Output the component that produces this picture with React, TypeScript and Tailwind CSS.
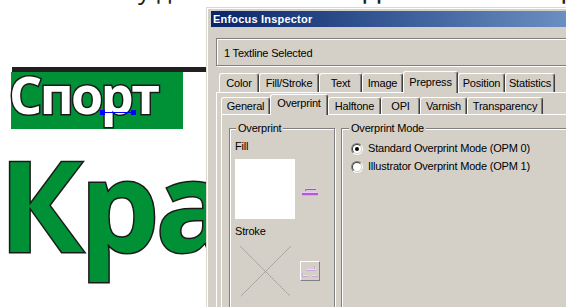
import React from "react";

const tabsRow1: { label: string; w: string; sel?: boolean }[] = [
  { label: "Color", w: "w-[40px]" },
  { label: "Fill/Stroke", w: "w-[60px]" },
  { label: "Text", w: "w-[43px]" },
  { label: "Image", w: "w-[41px]" },
  { label: "Prepress", w: "w-[55px]", sel: true },
  { label: "Position", w: "w-[47px]" },
  { label: "Statistics", w: "w-[50px]" },
];

const tabsRow2: { label: string; w: string; sel?: boolean }[] = [
  { label: "General", w: "w-[49px]" },
  { label: "Overprint", w: "w-[58px]", sel: true },
  { label: "Halftone", w: "w-[53px]" },
  { label: "OPI", w: "w-[39px]" },
  { label: "Varnish", w: "w-[47px]" },
  { label: "Transparency", w: "w-[76px]" },
];

const tabBase =
  "whitespace-nowrap text-center bg-[#d4d0c8] border-l border-t border-r border-white border-r-[#404040] rounded-t-[3px] shadow-[inset_-1px_0_0_#808080]";

function Row1Tab({ label, w, sel }: { label: string; w: string; sel?: boolean }) {
  return sel ? (
    <div className={`${tabBase} ${w} relative z-10 h-[22px] -mb-px pt-[4px]`}>{label}</div>
  ) : (
    <div className={`${tabBase} ${w} h-[19px] pt-[3px]`}>{label}</div>
  );
}

function Row2Tab({ label, w, sel }: { label: string; w: string; sel?: boolean }) {
  return sel ? (
    <div className={`${tabBase} ${w} relative z-10 h-[21px] -mb-px pt-[2px]`}>{label}</div>
  ) : (
    <div className={`${tabBase} ${w} h-[17px] pt-[2px]`}>{label}</div>
  );
}

function SwapIcon() {
  return (
    <svg width="16" height="9" viewBox="0 0 16 9" shapeRendering="crispEdges">
      <rect x="4" y="0" width="10" height="1" fill="#ecc8f8" />
      <rect x="4" y="1" width="10" height="1" fill="#a84ad4" />
      <rect x="3" y="1" width="1" height="1" fill="#c890e8" />
      <rect x="3" y="2" width="1" height="1" fill="#a84ad4" />
      <rect x="0" y="4" width="16" height="1" fill="#ecc8f8" />
      <rect x="0" y="5" width="16" height="2" fill="#b05ad8" />
      <rect x="0" y="7" width="16" height="1" fill="#d8a8ec" />
    </svg>
  );
}

function SwapIconDisabled() {
  return (
    <svg width="16" height="12" viewBox="0 0 16 12" shapeRendering="crispEdges">
      <rect x="12" y="0" width="1" height="4" fill="#c8a8dc" />
      <rect x="13" y="1" width="1" height="3" fill="#eadcf2" />
      <rect x="4" y="3" width="9" height="1" fill="#eadcf2" />
      <rect x="4" y="4" width="10" height="1" fill="#c8a8dc" />
      <rect x="0" y="7" width="1" height="4" fill="#c8a8dc" />
      <rect x="1" y="8" width="1" height="2" fill="#eadcf2" />
      <rect x="1" y="9" width="5" height="1" fill="#eadcf2" />
      <rect x="0" y="10" width="6" height="1" fill="#c8a8dc" />
      <rect x="10" y="9" width="5" height="1" fill="#eadcf2" />
      <rect x="10" y="10" width="6" height="1" fill="#c8a8dc" />
    </svg>
  );
}

function Radio({ checked }: { checked?: boolean }) {
  return (
    <div className="w-[12px] h-[12px] shrink-0 rounded-full border border-t-[#808080] border-l-[#808080] border-b-white border-r-white flex items-center justify-center">
      <div className="w-[10px] h-[10px] rounded-full border border-t-[#404040] border-l-[#404040] border-b-[#d4d0c8] border-r-[#d4d0c8] bg-white flex items-center justify-center">
        {checked && <div className="w-[4px] h-[4px] rounded-full bg-black" />}
      </div>
    </div>
  );
}

const etched = "border border-[#808080] shadow-[inset_1px_1px_0_#ffffff,1px_1px_0_#ffffff]";

export default function App() {
  return (
    <div className="relative w-[566px] h-[307px] overflow-hidden bg-white">
      {/* artwork canvas */}
      <span className="absolute left-[138px] top-[-23px] font-['Open_Sans',sans-serif] text-[25px] leading-none text-[#231f20]">у</span>
      <span className="absolute left-[157px] top-[-23px] font-['Open_Sans',sans-serif] text-[25px] leading-none text-[#231f20]">д</span>
      <span className="absolute left-[363px] top-[-29px] font-['Open_Sans',sans-serif] text-[31px] leading-none text-[#231f20]">д</span>
      <span className="absolute left-[562px] top-[-29px] font-['Open_Sans',sans-serif] text-[31px] leading-none text-[#231f20]">д</span>

      <div className="absolute left-[12px] top-[67px] w-[195px] h-[5px] bg-[#231f20]" />
      <div className="absolute left-[11px] top-[72px] w-[172px] h-[57px] bg-[#009036]" />
      <span className="absolute left-[9px] top-[68px] h-[62px] font-['Open_Sans',sans-serif] font-bold text-[52px] leading-none tracking-[-2.5px] text-white [-webkit-text-stroke:3px_#1a1a1a] [paint-order:stroke_fill]">
        Спорт
      </span>
      <div className="absolute left-[100px] top-[110px] flex items-center">
        <div className="w-[5px] h-[5px] bg-[#0000ff]" />
        <div className="w-[26px] h-px bg-[#0000ff]" />
        <div className="w-[5px] h-[5px] bg-[#0000ff]" />
      </div>
      <span className="absolute left-[-1px] top-[140px] font-['Open_Sans',sans-serif] font-bold text-[126px] leading-none tracking-[-4px] text-[#009036] [-webkit-text-stroke:3px_#1a1a1a] [paint-order:stroke_fill]">
        Кра
      </span>

      {/* Inspector window */}
      <div className="absolute left-[206px] top-[7px] w-[545px] h-[320px] bg-[#d4d0c8] border-l border-t border-[#dcd8d0] font-['Liberation_Sans',Arial,sans-serif] text-[11px] leading-[13px] tracking-[-0.2px] text-black">
        <div className="h-full border-l border-t border-white pl-[3px] pt-[2px] flex flex-col">
          <div className="h-[16px] shrink-0 bg-linear-to-r from-[#0a246a] to-[#a6caf0] flex items-center pl-[2px] text-white font-bold tracking-[0.2px]">
            Enfocus Inspector
          </div>
          <div className={`ml-[5px] mt-[11px] h-[28px] shrink-0 ${etched} pl-[7px] pt-[8px]`}>1 Textline Selected</div>

          <div className="ml-[5px] mt-[5px] flex flex-col">
            <div className="flex items-end h-[21px] pl-[3px]">
              {tabsRow1.map((t) => (
                <Row1Tab key={t.label} {...t} />
              ))}
            </div>
            <div className="border-l border-t border-white pl-[4px] pt-[1px] flex flex-col h-[230px]">
              <div className="flex items-end h-[20px]">
                {tabsRow2.map((t) => (
                  <Row2Tab key={t.label} {...t} />
                ))}
              </div>
              <div className="border-l border-t border-white pl-[7px] pt-[13px] flex flex-1">
                {/* Overprint group */}
                <div className={`relative w-[106px] h-[200px] shrink-0 ${etched} pl-[5px] pt-[11px] flex flex-col`}>
                  <div className="absolute left-[6px] -top-[7px] px-[2px] bg-[#d4d0c8]">Overprint</div>
                  <div>Fill</div>
                  <div className="mt-[6px] flex items-center">
                    <div className="w-[60px] h-[60px] bg-white" />
                    <div className="ml-[5px] w-[20px] h-[20px] pl-[2px] pt-[9px]">
                      <SwapIcon />
                    </div>
                  </div>
                  <div className="mt-[6px]">Stroke</div>
                  <div className="mt-[3px] flex items-center">
                    <svg width="60" height="60" viewBox="0 0 60 60">
                      <line x1="5.5" y1="5.5" x2="55.5" y2="55.5" stroke="#808080" strokeWidth="1" strokeDasharray="1.41 1.41" />
                      <line x1="55.5" y1="5.5" x2="5.5" y2="55.5" stroke="#808080" strokeWidth="1" strokeDasharray="1.41 1.41" />
                    </svg>
                    <div className="ml-[5px] w-[20px] h-[20px] border border-t-white border-l-white border-b-[#808080] border-r-[#808080] pl-[1px] pt-[4px]">
                      <SwapIconDisabled />
                    </div>
                  </div>
                </div>

                {/* Overprint Mode group */}
                <div className={`relative flex-1 ml-[6px] h-[200px] ${etched} pl-[9px] pt-[13px] flex flex-col gap-[5px]`}>
                  <div className="absolute left-[7px] -top-[7px] px-[2px] bg-[#d4d0c8]">Overprint Mode</div>
                  <div className="flex items-center">
                    <Radio checked />
                    <span className="ml-[5px] whitespace-nowrap">Standard Overprint Mode (OPM 0)</span>
                  </div>
                  <div className="flex items-center">
                    <Radio />
                    <span className="ml-[5px] whitespace-nowrap">Illustrator Overprint Mode (OPM 1)</span>
                  </div>
                </div>
              </div>
            </div>
          </div>
        </div>
      </div>
    </div>
  );
}
